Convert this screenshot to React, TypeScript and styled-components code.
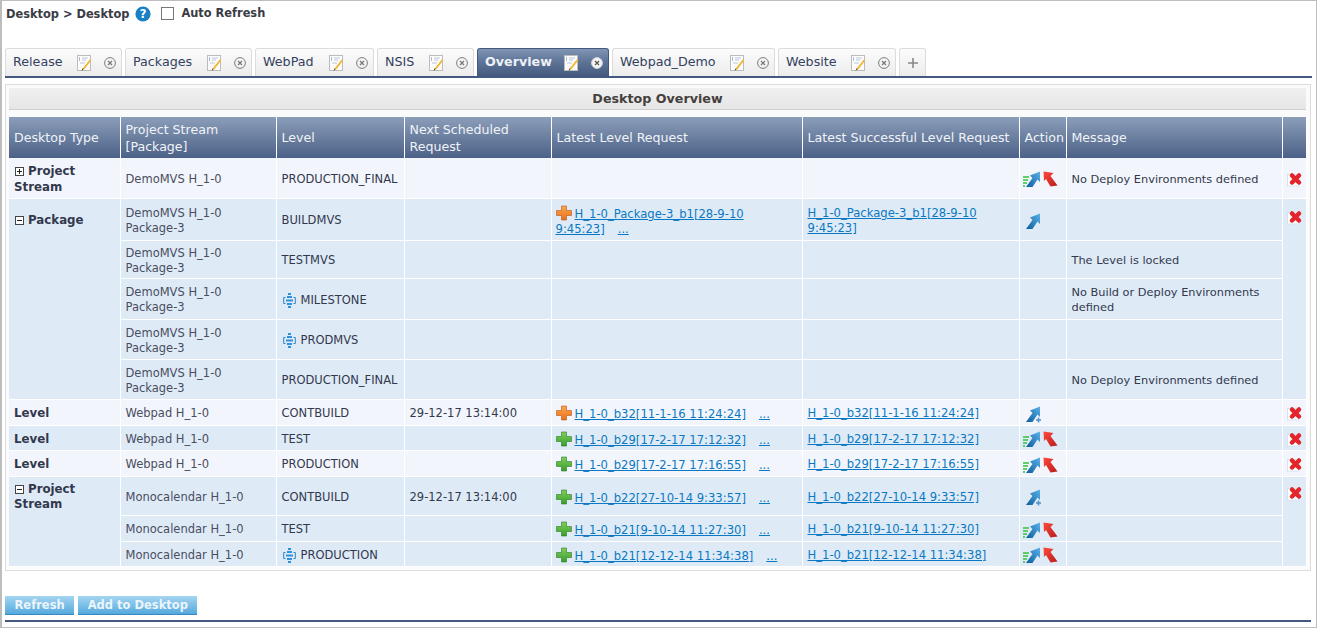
import React from 'react';
import styled, { createGlobalStyle } from 'styled-components';

const GlobalStyle = createGlobalStyle`
  html, body { margin: 0; padding: 0; background: #fff; }
  body { font-family: "DejaVu Sans", Verdana, sans-serif; font-size: 11px; color: #333; }
`;

const Page = styled.div`
  box-sizing: border-box;
  width: 1317px;
  height: 628px;
  overflow: hidden;
  border: 1px solid #bdbdbd;
  border-left-width: 2px;
  padding: 0 4px 0 3px;
`;

const TopBar = styled.div`
  display: flex;
  align-items: center;
  height: 26px;
  padding-left: 1px;
  font-weight: bold;
  color: #3b3b45;
`;

const Crumb = styled.span`
  font-size: 11.4px;
`;

const AutoLabel = styled.span`
  font-size: 11.4px;
  margin-left: 7px;
  margin-top: -2px;
`;

const CheckBox = styled.span`
  box-sizing: border-box;
  width: 13px;
  height: 13px;
  margin-left: 10px;
  margin-top: -1px;
  background: #fff;
  border: 1px solid #777;
`;

const TabStrip = styled.div`
  display: flex;
  gap: 3px;
  height: 28px;
  margin-top: 21px;
  border-bottom: 2px solid #44597f;
`;

const Tab = styled.div<{ $active?: boolean; $width: number }>`
  box-sizing: border-box;
  display: flex;
  align-items: center;
  width: ${p => p.$width}px;
  padding-left: 7px;
  border: 1px solid ${p => (p.$active ? '#44597f' : '#dcdcdc')};
  border-bottom: none;
  border-radius: 3px 3px 0 0;
  font-size: 12.7px;
  font-weight: ${p => (p.$active ? 'bold' : 'normal')};
  color: ${p => (p.$active ? '#eef1f6' : '#33415f')};
  background: ${p =>
    p.$active
      ? 'linear-gradient(#8195b5, #5f7698 45%, #44597f)'
      : 'linear-gradient(#fcfcfc, #ececec)'};
`;

const TabName = styled.span`
  flex: 1;
  margin-top: -2px;
`;

const TabIcons = styled.span`
  display: flex;
  align-items: center;
  gap: 12px;
  padding-right: 5px;
`;

const AddTab = styled.div`
  box-sizing: border-box;
  display: flex;
  align-items: center;
  justify-content: center;
  width: 27px;
  border: 1px solid #dcdcdc;
  border-bottom: none;
  border-radius: 3px 3px 0 0;
  background: linear-gradient(#fcfcfc, #ececec);
`;

const Panel = styled.div`
  box-sizing: border-box;
  height: 487px;
  margin-top: 6px;
  margin-right: 1px;
  padding: 3px 4px 0 3px;
  border: 1px solid #dcdcdc;
  background: #fbfbfb;
`;

const PanelTitle = styled.div`
  box-sizing: border-box;
  height: 22px;
  line-height: 21px;
  text-align: center;
  font-weight: bold;
  font-size: 12.7px;
  color: #45403c;
  background: linear-gradient(#f0f0f0, #e6e6e6);
  border-bottom: 1px solid #cfcfcf;
`;

const Table = styled.table`
  table-layout: fixed;
  width: 1297px;
  margin: 7px 0 0 0;
  border-collapse: collapse;
`;

const Th = styled.th`
  padding: 0 4px 0 5px;
  height: 41px;
  border-right: 1px solid #fff;
  font-weight: normal;
  font-size: 12.6px;
  line-height: 17px;
  text-align: left;
  color: #f0f3f8;
  background: linear-gradient(#8b9db9, #4b6186);
`;

const Row = styled.tr<{ $shade: boolean; $height: number }>`
  height: ${p => p.$height}px;
  background: ${p => (p.$shade ? '#deebf7' : '#f2f6fc')};
`;

const Td = styled.td`
  box-sizing: border-box;
  padding: 3px 4px 0 5px;
  border-right: 1px solid #fff;
  border-bottom: 1px solid #fff;
  font-size: 11.5px;
  line-height: 15px;
  color: #33384d;
  vertical-align: middle;
`;

const TypeCell = styled(Td)<{ $offset?: number }>`
  vertical-align: ${p => (p.$offset ? 'top' : 'middle')};
  padding-top: ${p => p.$offset ?? 4}px;
  font-weight: bold;
  font-size: 11.8px;
  line-height: 15.5px;
`;

const StreamCell = styled(Td)`
  color: #4a4d60;
`;

const LatestCell = styled(Td)`
  padding-left: 4px;
`;

const ActionCell = styled(Td)`
  padding-left: 3px;
  padding-right: 0;
`;

const MessageCell = styled(Td)`
  font-size: 11.35px;
`;

const IconRow = styled.div`
  display: flex;
  align-items: center;
  gap: 2px;
`;

const LevelName = styled.span`
  display: flex;
  align-items: center;
  gap: 5px;
`;

const Toggle = styled.span`
  display: inline-flex;
  vertical-align: -1px;
  margin: 0 4px 0 1px;
`;

const RemoveCell = styled(Td)<{ $offset?: number }>`
  vertical-align: ${p => (p.$offset ? 'top' : 'middle')};
  padding: ${p => p.$offset ?? 3}px 0 0 4px;
  line-height: 0;
`;

const RequestLink = styled.a`
  color: #0a78c2;
  text-decoration: underline;
  font-size: 11.6px;
`;

const More = styled(RequestLink)`
  margin-left: 13px;
`;

const StatusIcon = styled.span`
  display: inline-block;
  height: 15px;
  vertical-align: -3px;
  margin-right: 3px;
`;

const Actions = styled.div`
  display: flex;
  gap: 4px;
  margin-top: 25px;
  height: 19px;
`;

const Button = styled.button`
  padding: 0 9.5px;
  height: 19px;
  border: none;
  border-bottom: 1px solid #3489c2;
  font-family: inherit;
  font-size: 11.5px;
  font-weight: bold;
  color: #eaf5fc;
  background: linear-gradient(#a5d5f1, #55a9dd);
`;

const FooterRule = styled.div`
  height: 2px;
  margin: 5px 1px 0 0;
  background: #44597f;
`;

const HelpIcon = () => (
  <svg width="16" height="16" viewBox="0 0 16 16" style={{ marginLeft: 6 }}>
    <circle cx="8" cy="8" r="7.6" fill="#1a80c4" />
    <text x="8" y="12.2" fontFamily="DejaVu Sans" fontSize="11.5" fontWeight="bold" fill="#fff" textAnchor="middle">?</text>
  </svg>
);

const NoteIcon = () => (
  <svg width="15" height="16" viewBox="0 0 15 16">
    <rect x="0.5" y="0.5" width="13" height="15" fill="#fdfdfd" stroke="#bcbcbc" />
    <path d="M2 3h1M2 5h1" stroke="#5577aa" />
    <path d="M5 3h6M5 5h4M3 8h5" stroke="#b9c6d8" />
    <path d="M6 14.5 L13.5 5" stroke="#f2b632" strokeWidth="2" />
    <path d="M5 15.5 L6 13.5" stroke="#555" />
  </svg>
);

const CloseIcon = ({ active }: { active?: boolean }) => (
  <svg width="12" height="12" viewBox="0 0 12 12">
    <circle cx="6" cy="6" r="5.4" fill={active ? '#f4f4f4' : 'none'} stroke={active ? '#d8d8d8' : '#7d7d7d'} />
    <path d="M4 4l4 4M8 4l-4 4" stroke={active ? '#555' : '#777'} strokeWidth="1.2" />
  </svg>
);

const BoxIcon = ({ open }: { open: boolean }) => (
  <svg width="9" height="9" viewBox="0 0 9 9">
    <rect x="0.5" y="0.5" width="8" height="8" fill="#fff" stroke="#444" />
    <path d={open ? 'M2 4.5h5' : 'M2 4.5h5M4.5 2v5'} stroke="#222" />
  </svg>
);

const MilestoneIcon = () => (
  <svg width="13" height="15" viewBox="0 0 13 15" style={{ marginLeft: 1 }}>
    <path d="M2.5 4.5H0.7v6h1.8M10.5 4.5h1.8v6h-1.8" fill="none" stroke="#2f7fc4" />
    <path d="M5 1h3M4 4h5M3 7.500h7M4 11h5M5 14h3" stroke="#2f90dc" strokeWidth="1.9" />
  </svg>
);

const PlusIcon = ({ color }: { color: 'orange' | 'green' }) => {
  const id = `plus-${color}`;
  const [top, bottom, edge] = color === 'orange' ? ['#ffa64d', '#e8701a', '#b5571a'] : ['#7fcf5a', '#3a9e2e', '#2c7a24'];
  return (
    <svg width="16" height="16" viewBox="0 0 16 16">
      <defs>
        <linearGradient id={id} x1="0" y1="0" x2="0" y2="1">
          <stop offset="0" stopColor={top} />
          <stop offset="1" stopColor={bottom} />
        </linearGradient>
      </defs>
      <path d="M5.5 1h5v4.5H15.500v5h-5V15h-5v-4.500H.5v-5h5z" fill={`url(#${id})`} stroke={edge} strokeWidth="0.6" />
    </svg>
  );
};

const DeployArrow = ({ lines, small }: { lines?: boolean; small?: boolean }) => (
  <svg width="18" height="18" viewBox="0 0 18 18">
    <defs>
      <linearGradient id="blue-arrow" x1="0" y1="1" x2="1" y2="0">
        <stop offset="0" stopColor="#0b5c9c" />
        <stop offset="1" stopColor="#5cb2ea" />
      </linearGradient>
    </defs>
    {lines && <path d="M0 7h6M0 10h5M0 13h4M0 16h2" stroke="#35c23a" strokeWidth="1.5" />}
    <path d="M3 17 L9.500 8 L7 5.500 L17 1.500 L17 12 L14.500 9.500 L9.500 17z" fill="url(#blue-arrow)" />
    {small && <path d="M13 15h5M15.500 12.500v5" stroke="#4f8fc7" strokeWidth="1.5" />}
  </svg>
);

const RollbackArrow = () => (
  <svg width="15" height="16" viewBox="0 0 15 16">
    <defs>
      <linearGradient id="red-arrow" x1="0" y1="0" x2="1" y2="1">
        <stop offset="0" stopColor="#ff4a3d" />
        <stop offset="1" stopColor="#b81c1c" />
      </linearGradient>
    </defs>
    <path d="M0.500 0.500 L10.500 2 L7.500 5 L14.500 14.500 L7.500 15.500 L3 8 L1 10z" fill="url(#red-arrow)" />
  </svg>
);

const RemoveIcon = () => (
  <svg width="16" height="15" viewBox="0 0 16 15">
    <rect x="0.500" y="2.500" width="11" height="11.500" fill="#fff" stroke="#d5e2ef" />
    <path d="M5 3.500 L12 10.500 M12 3.500 L5 10.500" stroke="#e3242b" strokeWidth="4.500" strokeLinecap="round" />
  </svg>
);

type Request = { text: string; color: 'orange' | 'green' };
type RowData = {
  height: number;
  shade: boolean;
  type?: { label: string; toggle?: 'open' | 'closed'; span?: number; offset?: number };
  stream: string[];
  level: string;
  milestone?: boolean;
  next?: string;
  latest?: Request;
  success?: string;
  action?: 'both' | 'deploy' | 'deployPlus';
  message?: string;
  remove?: { span?: number; offset?: number };
};

const tabs = [
  { name: 'Release', width: 117 },
  { name: 'Packages', width: 127 },
  { name: 'WebPad', width: 119 },
  { name: 'NSIS', width: 97 },
  { name: 'Overview', width: 132, active: true },
  { name: 'Webpad_Demo', width: 163 },
  { name: 'Website', width: 118 },
];

const columns = ['Desktop Type', 'Project Stream [Package]', 'Level', 'Next Scheduled Request', 'Latest Level Request', 'Latest Successful Level Request', 'Action', 'Message', ''];
const widths = [111, 156, 128, 147, 251, 217, 47, 216, 24];

const mvs = ['DemoMVS H_1-0', 'Package-3'];

const rows: RowData[] = [
  { height: 40, shade: false, type: { label: 'Project Stream', toggle: 'closed' }, stream: ['DemoMVS H_1-0'], level: 'PRODUCTION_FINAL', action: 'both', message: 'No Deploy Environments defined', remove: {} },
  { height: 42, shade: true, type: { label: 'Package', toggle: 'open', span: 5, offset: 14 }, stream: mvs, level: 'BUILDMVS', latest: { text: 'H_1-0_Package-3_b1[28-9-10 9:45:23]', color: 'orange' }, success: 'H_1-0_Package-3_b1[28-9-10 9:45:23]', action: 'deploy', remove: { span: 5, offset: 11 } },
  { height: 38, shade: true, stream: mvs, level: 'TESTMVS', message: 'The Level is locked' },
  { height: 41, shade: true, stream: mvs, level: 'MILESTONE', milestone: true, message: 'No Build or Deploy Environments defined' },
  { height: 40, shade: true, stream: mvs, level: 'PRODMVS', milestone: true },
  { height: 40, shade: true, stream: mvs, level: 'PRODUCTION_FINAL', message: 'No Deploy Environments defined' },
  { height: 26, shade: false, type: { label: 'Level' }, stream: ['Webpad H_1-0'], level: 'CONTBUILD', next: '29-12-17 13:14:00', latest: { text: 'H_1-0_b32[11-1-16 11:24:24]', color: 'orange' }, success: 'H_1-0_b32[11-1-16 11:24:24]', action: 'deployPlus', remove: {} },
  { height: 25, shade: true, type: { label: 'Level' }, stream: ['Webpad H_1-0'], level: 'TEST', latest: { text: 'H_1-0_b29[17-2-17 17:12:32]', color: 'green' }, success: 'H_1-0_b29[17-2-17 17:12:32]', action: 'both', remove: {} },
  { height: 26, shade: false, type: { label: 'Level' }, stream: ['Webpad H_1-0'], level: 'PRODUCTION', latest: { text: 'H_1-0_b29[17-2-17 17:16:55]', color: 'green' }, success: 'H_1-0_b29[17-2-17 17:16:55]', action: 'both', remove: {} },
  { height: 39, shade: true, type: { label: 'Project Stream', toggle: 'open', span: 3, offset: 5 }, stream: ['Monocalendar H_1-0'], level: 'CONTBUILD', next: '29-12-17 13:14:00', latest: { text: 'H_1-0_b22[27-10-14 9:33:57]', color: 'green' }, success: 'H_1-0_b22[27-10-14 9:33:57]', action: 'deployPlus', remove: { span: 3, offset: 9 } },
  { height: 26, shade: true, stream: ['Monocalendar H_1-0'], level: 'TEST', latest: { text: 'H_1-0_b21[9-10-14 11:27:30]', color: 'green' }, success: 'H_1-0_b21[9-10-14 11:27:30]', action: 'both' },
  { height: 25, shade: true, stream: ['Monocalendar H_1-0'], level: 'PRODUCTION', milestone: true, latest: { text: 'H_1-0_b21[12-12-14 11:34:38]', color: 'green' }, success: 'H_1-0_b21[12-12-14 11:34:38]', action: 'both' },
];

const ActionIcons = ({ kind }: { kind: RowData['action'] }) => {
  if (!kind) return null;
  return (
    <IconRow>
      <DeployArrow lines={kind === 'both'} small={kind === 'deployPlus'} />
      {kind === 'both' && <RollbackArrow />}
    </IconRow>
  );
};

const App: React.FC = () => (
  <Page>
    <GlobalStyle />
    <TopBar>
      <Crumb>Desktop &gt; Desktop</Crumb>
      <HelpIcon />
      <CheckBox />
      <AutoLabel>Auto Refresh</AutoLabel>
    </TopBar>
    <TabStrip>
      {tabs.map(tab => (
        <Tab key={tab.name} $active={tab.active} $width={tab.width}>
          <TabName>{tab.name}</TabName>
          <TabIcons>
            <NoteIcon />
            <CloseIcon active={tab.active} />
          </TabIcons>
        </Tab>
      ))}
      <AddTab>
        <svg width="12" height="12" viewBox="0 0 12 12">
          <path d="M6 1v10M1 6h10" stroke="#888" strokeWidth="1.6" />
        </svg>
      </AddTab>
    </TabStrip>
    <Panel>
      <PanelTitle>Desktop Overview</PanelTitle>
      <Table>
        <colgroup>
          {widths.map((w, i) => <col key={i} style={{ width: w }} />)}
        </colgroup>
        <thead>
          <tr>{columns.map((c, i) => <Th key={i}>{c}</Th>)}</tr>
        </thead>
        <tbody>
          {rows.map((row, i) => (
            <Row key={i} $shade={row.shade} $height={row.height}>
              {row.type && (
                <TypeCell rowSpan={row.type.span} $offset={row.type.offset}>
                  {row.type.toggle && <Toggle><BoxIcon open={row.type.toggle === 'open'} /></Toggle>}
                  {row.type.label}
                </TypeCell>
              )}
              <StreamCell>{row.stream.map(s => <div key={s}>{s}</div>)}</StreamCell>
              <Td>
                <LevelName>
                  {row.milestone && <MilestoneIcon />}
                  {row.level}
                </LevelName>
              </Td>
              <Td>{row.next}</Td>
              <LatestCell>
                {row.latest && (
                  <>
                    <StatusIcon><PlusIcon color={row.latest.color} /></StatusIcon>
                    <RequestLink>{row.latest.text}</RequestLink>
                    <More>...</More>
                  </>
                )}
              </LatestCell>
              <Td>{row.success && <RequestLink>{row.success}</RequestLink>}</Td>
              <ActionCell><ActionIcons kind={row.action} /></ActionCell>
              <MessageCell>{row.message}</MessageCell>
              {row.remove && (
                <RemoveCell rowSpan={row.remove.span} $offset={row.remove.offset}>
                  <RemoveIcon />
                </RemoveCell>
              )}
            </Row>
          ))}
        </tbody>
      </Table>
    </Panel>
    <Actions>
      <Button>Refresh</Button>
      <Button>Add to Desktop</Button>
    </Actions>
    <FooterRule />
  </Page>
);

export default App;
